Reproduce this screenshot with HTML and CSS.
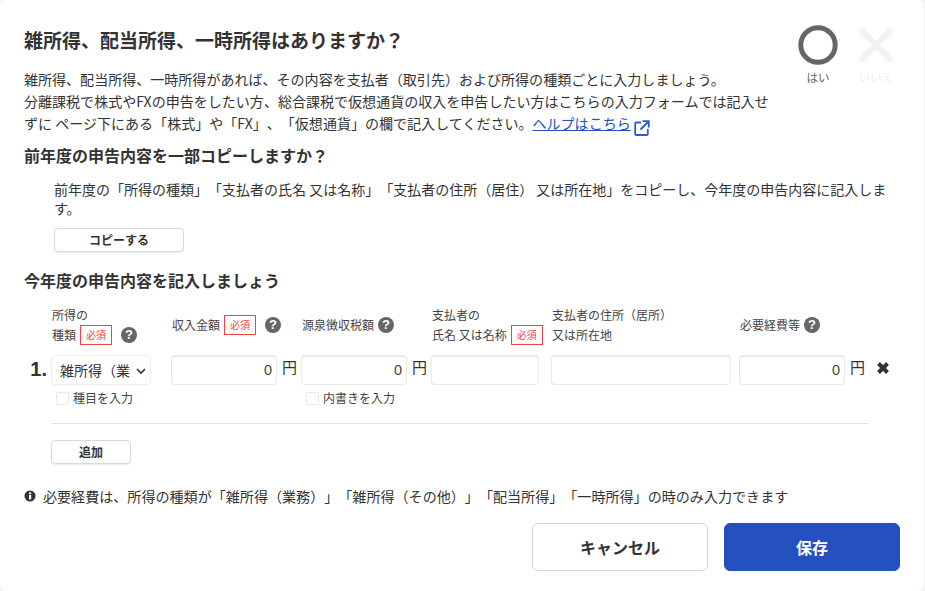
FILE: index.html
```html
<!DOCTYPE html>
<html lang="ja">
<head>
<meta charset="utf-8">
<title>雑所得、配当所得、一時所得</title>
<link rel="stylesheet" href="styles.css">
</head>
<body>
<main class="modal">
  <header class="head">
    <div class="intro">
      <h1 class="title">雑所得、配当所得、一時所得はありますか？</h1>
      <p class="lead">雑所得、配当所得、一時所得があれば、その内容を支払者（取引先）および所得の種類ごとに入力しましょう。<br>分離課税で株式やFXの申告をしたい方、総合課税で仮想通貨の収入を申告したい方はこちらの入力フォームでは記入せずに ページ下にある「株式」や「FX」、「仮想通貨」の欄で記入してください。<a class="help" href="#">ヘルプはこちら</a><svg class="ext" viewBox="0 0 16 16"><path d="M7 2.5H2.2a1 1 0 0 0-1 1V14a1 1 0 0 0 1 1h10.6a1 1 0 0 0 1-1V9M6.5 9.5 14.5 1.5M8.5 1.2h6.3v6.3" fill="none" stroke="#2f5bc8" stroke-width="1.8"/></svg></p>
    </div>
    <div class="answers">
      <div class="answer">
        <svg class="mark" viewBox="0 0 40 40"><circle cx="20" cy="20" r="17.2" fill="none" stroke="#666" stroke-width="5"/></svg>
        <span class="ans-label">はい</span>
      </div>
      <div class="answer off">
        <svg class="mark" viewBox="0 0 40 40"><path d="M4 4 36 36M36 4 4 36" fill="none" stroke="#f3f2f2" stroke-width="5.5"/></svg>
        <span class="ans-label">いいえ</span>
      </div>
    </div>
  </header>

  <h2 class="sub copy-title">前年度の申告内容を一部コピーしますか？</h2>
  <div class="copy">
    <p class="copy-text">前年度の「所得の種類」「支払者の氏名 又は名称」「支払者の住所（居住） 又は所在地」をコピーし、今年度の申告内容に記入します。</p>
    <button class="btn-small copy-btn">コピーする</button>
  </div>

  <h2 class="sub now-title">今年度の申告内容を記入しましょう</h2>

  <div class="grid">
    <div class="num"></div>
    <div class="lab"><span>所得の<br>種類<em class="req">必須</em><i class="q">?</i></span></div>
    <div class="lab"><span>収入金額<em class="req">必須</em><i class="q">?</i></span></div>
    <div class="lab"><span>源泉徴収税額<i class="q tight">?</i></span></div>
    <div class="lab"><span>支払者の<br>氏名 又は名称<em class="req">必須</em></span></div>
    <div class="lab"><span>支払者の住所（居所）<br>又は所在地</span></div>
    <div class="lab"><span>必要経費等<i class="q tight">?</i></span></div>
    <div></div>

    <div class="num">1.</div>
    <div class="cell"><div class="select">雑所得（業<svg class="chev" viewBox="0 0 10 6"><path d="M1 1l4 4 4-4" fill="none" stroke="#333" stroke-width="1.7"/></svg></div></div>
    <div class="cell"><div class="input amount">0</div><span class="yen">円</span></div>
    <div class="cell"><div class="input amount">0</div><span class="yen">円</span></div>
    <div class="cell"><div class="input w108"></div></div>
    <div class="cell"><div class="input w180"></div></div>
    <div class="cell"><div class="input amount">0</div><span class="yen">円</span></div>
    <div class="cell"><svg class="del" viewBox="0 0 14 14"><path d="M2.5 2.5 11.5 11.5M11.5 2.5 2.5 11.5" fill="none" stroke="#333" stroke-width="4"/></svg></div>

    <div></div>
    <label class="check c1"><span class="box"></span>種目を入力</label>
    <div></div>
    <label class="check c3"><span class="box"></span>内書きを入力</label>
  </div>

  <hr class="rule">
  <button class="btn-small add">追加</button>

  <p class="note"><svg class="info" viewBox="0 0 12 12"><circle cx="6" cy="6" r="5.5" fill="#333"/><rect x="5" y="5" width="2.2" height="4.4" fill="#fff"/><rect x="5" y="2.4" width="2.2" height="1.8" fill="#fff"/></svg>必要経費は、所得の種類が「雑所得（業務）」「雑所得（その他）」「配当所得」「一時所得」の時のみ入力できます</p>

  <footer class="foot">
    <button class="btn-big cancel">キャンセル</button>
    <button class="btn-big save">保存</button>
  </footer>
</main>
</body>
</html>
```
FILE: styles.css
```css
* { box-sizing: border-box; }
html, body { margin: 0; height: 100%; }
body {
  width: 925px; height: 591px; overflow: hidden; background: #f2f2f2;
  font-family: "Noto Sans CJK JP", "Liberation Sans", sans-serif;
  color: #333;
  text-spacing-trim: space-all;
}
.modal {
  width: 924px; height: 591px; background: #fff;
  border-radius: 6px; padding: 28px 24px 0 24px;
}
.head { display: flex; justify-content: space-between; height: 108px; }
.intro { width: 746px; }
.title { margin: 0; font-size: 19px; line-height: 24px; font-weight: 700; }
.lead { margin: 16px 0 0; font-size: 14.04px; line-height: 22px; color: #333; }
.help { color: #2250c0; text-decoration: underline; }
.ext { width: 16px; height: 16px; margin-left: 3px; vertical-align: -7px; }
.answers { display: flex; gap: 18px; margin-top: -3px; margin-right: 4px; }
.answer { width: 40px; display: flex; flex-direction: column; align-items: center; }
.mark { width: 40px; height: 40px; flex: none; }
.ans-label { font-size: 11.5px; line-height: 14px; color: #666; margin-top: 5px; white-space: nowrap; }
.off .ans-label { color: #f0eeee; }
.sub { margin: 0; font-size: 16px; line-height: 22px; font-weight: 700; }
.copy-title { margin-top: 8px; }
.copy { padding: 14px 0 0 30px; }
.copy-text { margin: 0; font-size: 14px; line-height: 19px; }
.btn-small {
  display: block; height: 24px; background: #fff; border: 1px solid #d9d9d9; border-radius: 4px;
  font: 700 12px/22px "Noto Sans CJK JP", sans-serif; color: #333; padding: 0;
  box-shadow: 0 1px 0 #eee;
}
.copy-btn { width: 130px; margin-top: 10px; }
.now-title { margin-top: 17px; }
.grid {
  display: grid;
  grid-template-columns: 27px 120px 130px 130px 120px 188px 137px 20px;
  margin-top: 11px;
}
.lab { font-size: 12px; line-height: 20px; color: #444; height: 46px; margin-bottom: 7px; display: flex; align-items: center; white-space: nowrap; padding-left: 1px; }
.req {
  display: inline-block; width: 32px; height: 20px; border: 1px solid #e44; color: #e44;
  font-size: 10px; line-height: 18px; text-align: center; font-style: normal; margin-left: 4px; vertical-align: top;
}
.q {
  display: inline-flex; align-items: center; justify-content: center; width: 16px; height: 16px; border-radius: 50%;
  background: #666; color: #fff; font: 700 13px/16px "Liberation Sans", sans-serif; margin-left: 9px; vertical-align: top; margin-top: 2px;
}
.tight { margin-left: 4px; }
.num { font-size: 20px; line-height: 28px; font-weight: 700; font-family: "Liberation Sans", sans-serif; text-align: right; padding-right: 4px; }
.cell { display: flex; align-items: flex-start; gap: 5px; }
.select {
  width: 100px; height: 30px; border: 1px solid #eee; border-radius: 4px; font-size: 14px; line-height: 28px;
  padding-left: 8px; position: relative; white-space: nowrap;
}
.chev { position: absolute; right: 4px; top: 12px; width: 10px; height: 6px; }
.input { height: 30px; border: 1px solid #e9e9e9; border-top-width: 2px; border-radius: 4px; background: #fff; font: 14.5px/27px "Liberation Sans", sans-serif; text-align: right; padding-right: 4px; color: #444; }
.amount { width: 106px; }
.w108 { width: 108px; }
.w180 { width: 180px; }
.yen { font-size: 15px; line-height: 24px; }
.del { width: 14px; height: 14px; margin-top: 6px; }
.check { font-size: 12px; line-height: 18px; color: #444; display: flex; align-items: center; gap: 4px; margin-top: 4px; }
.c1 { padding-left: 5px; }
.c3 { padding-left: 5px; white-space: nowrap; }
.box { width: 13px; height: 13px; border: 1px solid #e9e9e9; border-radius: 2px; }
.rule { margin: 16px 31px 0 27px; border: 0; border-top: 1px solid #e5e5e5; }
.add { width: 80px; margin: 16px 0 0 27px; }
.note { margin: 23px 0 0; font-size: 14.07px; line-height: 18px; display: flex; align-items: center; white-space: nowrap; }
.info { width: 12px; height: 12px; margin-right: 7px; }
.foot { display: flex; justify-content: flex-end; gap: 16px; margin-top: 18px; }
.btn-big { width: 176px; height: 48px; border-radius: 6px; font: 700 16px "Noto Sans CJK JP", sans-serif; }
.cancel { background: #fff; border: 1px solid #d5d5d5; color: #333; }
.save { background: #2450c0; border: 1px solid #2450c0; color: #fff; }
```
